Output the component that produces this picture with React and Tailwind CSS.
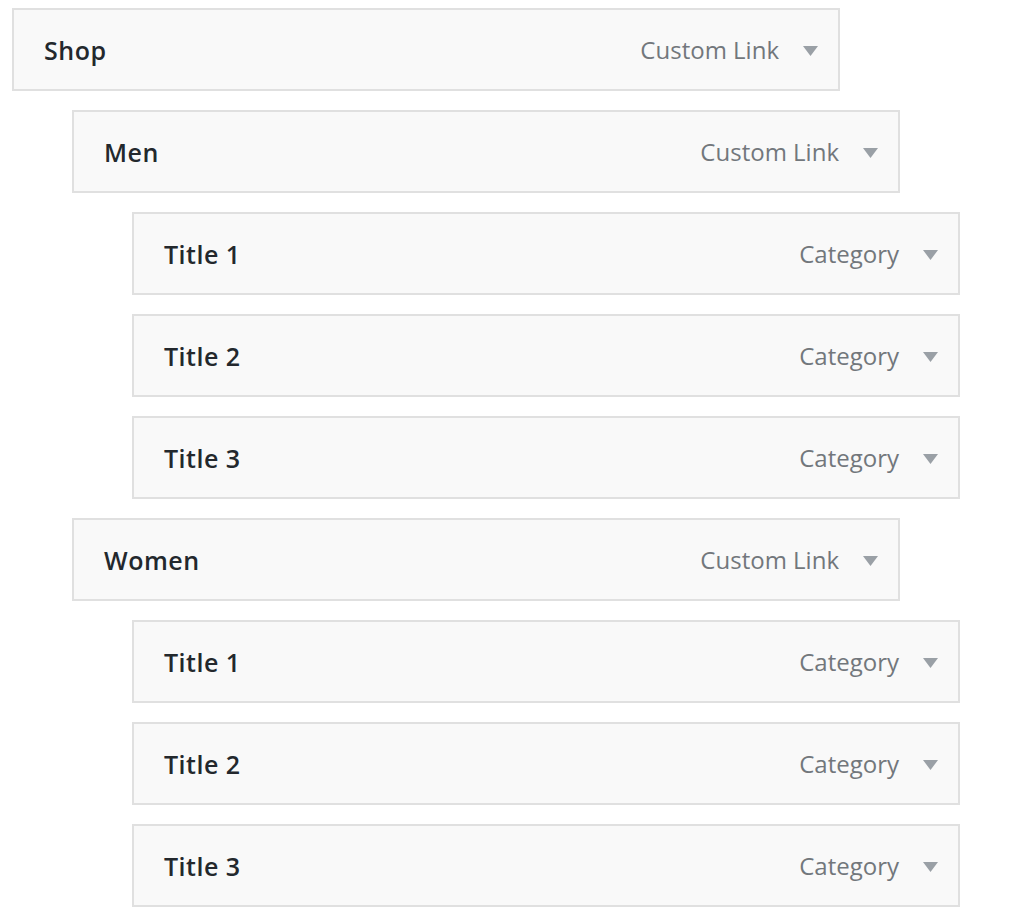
import React from 'react';

const items = [
  { title: 'Shop', type: 'Custom Link', depth: 0 },
  { title: 'Men', type: 'Custom Link', depth: 1 },
  { title: 'Title 1', type: 'Category', depth: 2 },
  { title: 'Title 2', type: 'Category', depth: 2 },
  { title: 'Title 3', type: 'Category', depth: 2 },
  { title: 'Women', type: 'Custom Link', depth: 1 },
  { title: 'Title 1', type: 'Category', depth: 2 },
  { title: 'Title 2', type: 'Category', depth: 2 },
  { title: 'Title 3', type: 'Category', depth: 2 },
];

const indent = ['ml-0', 'ml-[60px]', 'ml-[120px]'];

function MenuItem({ title, type, depth }) {
  return (
    <div className={`${indent[depth]} w-[828px] h-[83px] bg-[#f9f9f9] border-2 border-[#e0e0e0] flex items-center justify-between pl-[30px] pr-[20px]`}>
      <span className="mt-[2px] text-[25px] tracking-[0.5px] font-semibold text-[#23282d]">{title}</span>
      <div className="flex items-center gap-[24px]">
        <span className="text-[24px] text-[#72777c]">{type}</span>
        <svg width="15" height="10" viewBox="0 0 15 10" className="mt-[2px]">
          <path d="M0 0 L15 0 L7.5 10 Z" fill="#9aa0a6" />
        </svg>
      </div>
    </div>
  );
}

export default function App() {
  return (
    <div className="min-h-screen bg-white pt-[8px] pl-[12px] flex flex-col gap-[19px]" style={{ fontFamily: '"Open Sans", sans-serif' }}>
      {items.map((item, i) => (
        <MenuItem key={i} {...item} />
      ))}
    </div>
  );
}
